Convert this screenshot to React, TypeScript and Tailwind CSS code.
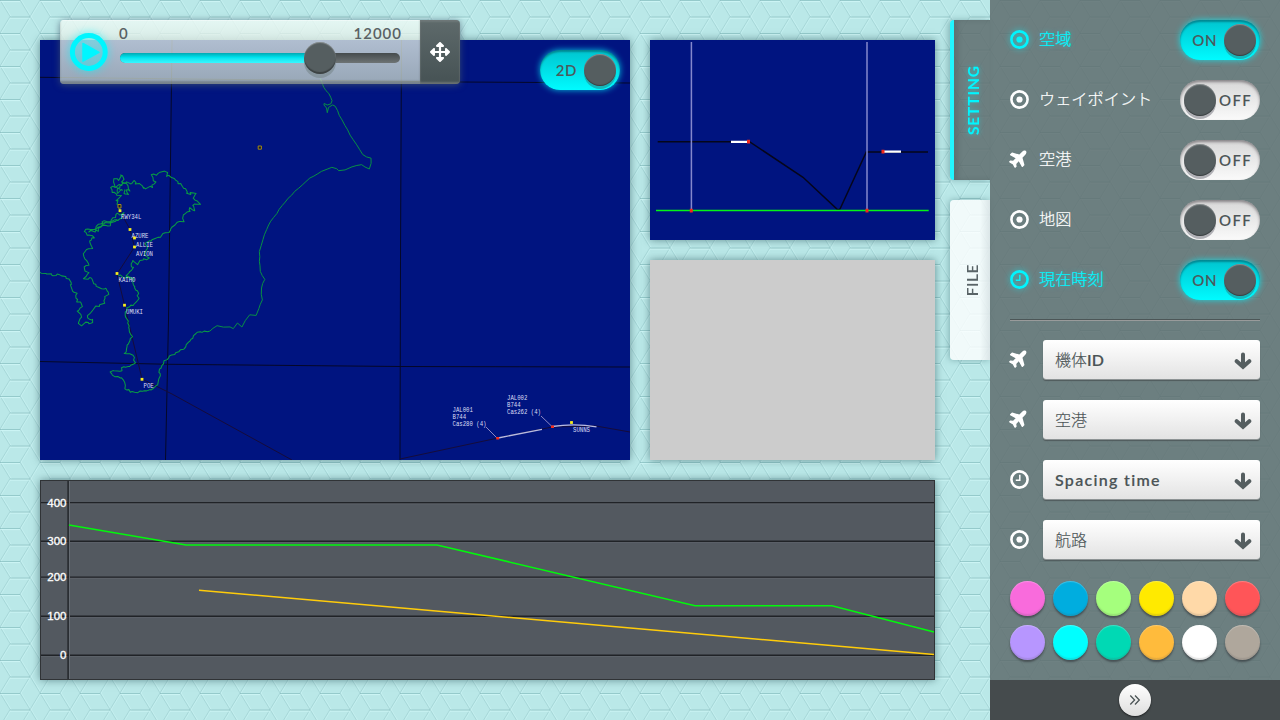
import type { ReactNode } from "react";
import { FaArrowsAlt, FaPlane } from "react-icons/fa";

type Pt = [number, number];

/* Breaks a polyline into short, slightly displaced steps so that it reads as a coast. */
function coast(points: Pt[], step: number, amp: number, seed: number): string {
  let s = seed;
  const rnd = () => {
    s = (s * 16807) % 2147483647;
    return s / 2147483647 - 0.5;
  };
  let d = `M${points[0][0]} ${points[0][1]}`;
  for (let i = 1; i < points.length; i++) {
    const [x0, y0] = points[i - 1];
    const [x1, y1] = points[i];
    const n = Math.max(1, Math.round(Math.hypot(x1 - x0, y1 - y0) / step));
    for (let k = 1; k <= n; k++) {
      const t = k / n;
      const x = x0 + (x1 - x0) * t + rnd() * amp;
      const y = y0 + (y1 - y0) * t + rnd() * amp;
      d += `L${x.toFixed(1)} ${y.toFixed(1)}`;
    }
  }
  return d;
}

const WEST: Pt[] = [[-90, 336], [-60, 343], [-35, 345], [-15, 350], [0, 366], [8, 390], [19, 398], [22, 425], [36, 432], [25, 455], [32, 470], [22, 490], [32, 500], [45, 490], [70, 490], [68, 480], [55, 478], [53, 465], [62, 455], [85, 438], [103, 428], [108, 408], [118, 394], [100, 386], [82, 382], [68, 363], [58, 352], [42, 358], [55, 340], [45, 325], [56, 312], [38, 290], [40, 280], [50, 268], [64, 265], [60, 240], [70, 232], [40, 218], [50, 206], [70, 212], [78, 200], [95, 190], [105, 184], [150, 178], [158, 160], [140, 165], [120, 185], [90, 197], [85, 210], [60, 215], [90, 200], [120, 195], [140, 178]];
const NORTH: Pt[] = [[150, 150], [148, 135], [140, 118], [150, 105], [132, 100], [125, 82], [140, 78], [130, 58], [150, 60], [155, 44], [160, 70], [142, 80], [155, 90], [138, 98], [150, 75], [165, 68], [180, 72], [188, 62], [200, 72], [215, 75], [222, 86], [245, 82], [256, 65], [248, 48], [262, 42], [278, 34], [292, 38], [288, 46], [305, 52], [320, 65], [340, 85], [358, 102], [368, 95], [380, 105], [370, 118], [388, 130], [370, 132], [376, 148], [362, 142], [355, 160], [340, 166], [338, 182], [318, 190], [300, 214], [280, 220], [262, 235], [240, 240], [228, 252], [232, 275], [222, 285], [235, 295], [210, 302], [205, 310], [190, 298], [180, 315], [188, 325], [172, 345], [180, 352], [145, 348]];
const SOUTH: Pt[] = [[172, 350], [188, 355], [192, 380], [203, 395], [205, 420], [195, 432], [172, 442], [165, 460], [175, 490], [178, 515], [185, 530], [172, 555], [165, 580], [188, 585], [195, 608], [180, 622], [160, 618], [155, 632], [120, 635], [130, 648], [155, 655], [165, 670], [162, 685], [180, 695], [225, 695], [245, 690], [262, 675], [268, 655], [270, 630], [285, 605], [305, 585], [345, 565], [355, 548], [368, 535], [375, 520], [390, 514], [405, 515], [420, 515]];
const BAY: Pt[] = [[158, 68], [172, 74], [180, 92], [170, 88], [174, 105], [160, 98], [166, 86]];
const EAST: Pt[] = [[-60, 783], [-40, 768], [-20, 772], [0, 771], [10, 775], [22, 760], [36, 772], [45, 752], [60, 735], [78, 737], [86, 715], [96, 690], [94, 655], [104, 628], [90, 603], [88, 545], [98, 508], [115, 465], [140, 430], [165, 395], [195, 365], [240, 325], [275, 303], [305, 293], [320, 295], [326, 301], [345, 299], [365, 290], [395, 283], [406, 290], [418, 298], [423, 280], [423, 264], [410, 261], [398, 253], [380, 225], [352, 180], [335, 150], [315, 108], [308, 104], [296, 111], [292, 128], [290, 113], [282, 105], [282, 100], [292, 106], [303, 101], [307, 92], [297, 70], [288, 62], [276, 40], [270, 25]];

const FIXES: { name: string; x: number; y: number; tx: number; ty: number }[] = [
  { name: "RWY34L", x: 120, y: 210.7, tx: 121, ty: 219 },
  { name: "AZURE", x: 130, y: 229.5, tx: 131.5, ty: 238 },
  { name: "ALLIE", x: 134.5, y: 238, tx: 136, ty: 246.5 },
  { name: "AVION", x: 134.5, y: 247, tx: 136, ty: 255.7 },
  { name: "KAIHO", x: 117, y: 273.5, tx: 118.5, ty: 282 },
  { name: "UMUKI", x: 124.5, y: 305.2, tx: 126, ty: 313.6 },
  { name: "POE", x: 142, y: 379.3, tx: 143.5, ty: 387.6 },
  { name: "SUNNS", x: 571.5, y: 422.5, tx: 573, ty: 431.5 },
];

const FLIGHTS = [
  { lines: ["JAL001", "B744", "Cas280 (4)"], x: 452.5, y: 411.5 },
  { lines: ["JAL002", "B744", "Cas262 (4)"], x: 507, y: 400 },
];

function MapText({ x, y, children }: { x: number; y: number; children: string }) {
  return (
    <text x={x} y={y} textLength={children.length * 3.4} lengthAdjust="spacingAndGlyphs" fontSize="7" fill="#dcdef4" className="font-['Liberation_Mono',monospace]">
      {children}
    </text>
  );
}

function Backdrop() {
  const diagonals = "M0 0L10 16.5M40 0L30 16.5M20 0L30 16.5M10 16.5L0 33M30 16.5L40 33M30 16.5L20 33";
  return (
    <svg className="absolute inset-0 h-full w-full" aria-hidden="true">
      <defs>
        <pattern id="cubes" width="40" height="33" patternUnits="userSpaceOnUse">
          <path d={diagonals} stroke="#d0f8f8" strokeWidth="1" fill="none" opacity=".45" transform="translate(1.2 0)" />
          <path d={diagonals} stroke="#86babd" strokeWidth="1" fill="none" opacity=".38" />
          <path d="M0 1.6H20M10 18.1H30" stroke="#d6fbfb" strokeWidth="1" opacity=".65" />
          <path d="M0 .5H20M10 17H30" stroke="#7db5b8" strokeWidth="1" opacity=".6" />
        </pattern>
      </defs>
      <rect width="100%" height="100%" fill="#bae8e8" />
      <rect width="100%" height="100%" fill="url(#cubes)" />
    </svg>
  );
}

function AirMap() {
  return (
    <svg viewBox="40 40 590 420" className="block h-[420px] w-[590px] bg-[#001480] shadow-[0_0_8px_rgba(30,70,75,0.55)]">
      <g stroke="#050828" strokeWidth="1" fill="none">
        <path d="M40 77.3L460 82L630 83M40 361.5L170 364.3L400 366.5L630 367M172 40L170.5 160L168.5 320L165.5 460M401.5 40L400.5 260L400 460" />
        <path d="M120 211L130 229.5L134.5 247L117 274L124.5 305L142 379L172 394L292 460M400 459L498 438L552 427L596 426L630 432" stroke="#150c3a" />
      </g>
      <g transform="translate(70 160) scale(.33333)" fill="none" stroke="#089c44" strokeWidth="3.1" strokeLinejoin="round">
        <path d={coast(WEST, 7, 8, 21)} />
        <path d={coast(NORTH, 7, 9, 77)} />
        <path d={coast(SOUTH, 7, 6, 5)} />
        <path d={coast(BAY, 6, 6, 9)} />
      </g>
      <path transform="translate(230 70) scale(.33333)" d={coast(EAST, 16, 2.5, 33)} fill="none" stroke="#089044" strokeWidth="3" strokeLinejoin="round" />
      <path d="M118 204.5h3v3.5h-3zM258.2 146h3.2v3.2h-3.2z" fill="#14143c" stroke="#a08a14" strokeWidth="1" />
      {FIXES.map((f) => (
        <g key={f.name}>
          <rect x={f.x - 1.4} y={f.y - 1.4} width="2.8" height="2.8" fill="#f7ee1c" />
          <MapText x={f.tx} y={f.ty}>{f.name}</MapText>
        </g>
      ))}
      {FLIGHTS.map((f) => (
        <g key={f.lines[0]}>
          {f.lines.map((l, i) => (
            <MapText key={l} x={f.x} y={f.y + i * 7.2}>{l}</MapText>
          ))}
        </g>
      ))}
      <path d="M486 427L497 438M541 416L552 426.5" stroke="#8a86c4" strokeWidth="1" />
      <path d="M498 438L542 429.3M552 426.5Q575 423 596.5 426.8" stroke="#b9bbe0" strokeWidth="1.3" fill="none" />
      <path d="M496.2 437h3v2.6h-3zM551 425.5h3v2.6h-3z" fill="#f32a1c" />
    </svg>
  );
}

function Profile() {
  return (
    <svg viewBox="650 40 285 200" className="block h-[200px] w-[285px] bg-[#001480] shadow-[0_0_8px_rgba(30,70,75,0.55)]">
      <path d="M657.7 141.7H749.5L803 177.3L838 210L840 209L866.3 152H928" fill="none" stroke="#05061a" strokeWidth="1.5" />
      <path d="M691.4 42V210M867 42V210" stroke="#8488cc" strokeWidth="1.5" />
      <path d="M656 210.6H928.7" stroke="#04f416" strokeWidth="1.5" />
      <path d="M731 141.8H748M884 151.7H901" stroke="#fff" strokeWidth="2.2" />
      <path d="M747 139.8h3v3.8h-3zM881.5 149.8h3v3.8h-3zM689.8 208.8h3v3.6h-3zM865.5 208.8h3v3.6h-3z" fill="#f0281c" />
    </svg>
  );
}

const LEVELS = [
  { label: "400", y: 502.6 },
  { label: "300", y: 541.3 },
  { label: "200", y: 577.1 },
  { label: "100", y: 616.3 },
  { label: "0", y: 655.2 },
];

function AltitudeChart() {
  return (
    <svg viewBox="40 480 895 200" className="block h-[200px] w-[895px] bg-[#535960] shadow-[0_0_8px_rgba(30,70,75,0.55)]">
      {LEVELS.map((l) => (
        <g key={l.label}>
          <path d={`M40 ${l.y + 1.3}H935`} stroke="#5c6269" strokeWidth="1" />
          <path d={`M40 ${l.y}H935`} stroke="#202327" strokeWidth="1.4" />
        </g>
      ))}
      <path d="M69.5 480V680" stroke="#666c73" strokeWidth="1" />
      <path d="M68.1 480V680" stroke="#24272b" strokeWidth="1.5" />
      {LEVELS.map((l) => (
        <text key={l.label} x="66.5" y={l.y + 4} textAnchor="end" fontSize="10.3" textLength={l.label.length * 6.4} lengthAdjust="spacingAndGlyphs" fill="#fff" stroke="#fff" strokeWidth=".3" className="font-['Liberation_Sans',sans-serif]">
          {l.label}
        </text>
      ))}
      <path d="M69 525L186 544.9H437L695 605.8H832L934 632" fill="none" stroke="#02f80c" strokeWidth="1.5" />
      <path d="M199 590.2L934 654.6" stroke="#ffcc0a" strokeWidth="1.5" />
      <rect x="40.5" y="480.5" width="894" height="199" fill="none" stroke="#303336" />
    </svg>
  );
}

function Toggle({ on, label }: { on: boolean; label: string }) {
  return on ? (
    <div className="flex h-10 w-20 items-center justify-end gap-[7px] rounded-full bg-linear-to-b from-[#00c4cf] to-[#00fbff] pr-1 shadow-[0_0_6px_rgba(0,245,255,0.75),inset_0_2px_2px_rgba(0,95,105,0.6)]">
      <span className="text-[15px] font-semibold tracking-[0.6px] text-[#4b5a5c]">{label}</span>
      <Knob shade="shadow-[0_3px_0_rgba(30,160,165,0.75),inset_0_1px_1px_rgba(255,255,255,0.3),inset_0_-1px_1px_rgba(0,0,0,0.35)]" />
    </div>
  ) : (
    <div className="flex h-10 w-20 items-center gap-[3px] rounded-full bg-linear-to-b from-[#d8d8d8] to-[#fafafa] pl-1 shadow-[inset_0_2px_3px_rgba(80,75,80,0.6)]">
      <Knob shade="shadow-[0_3px_0_rgba(165,165,170,0.85),inset_0_1px_1px_rgba(255,255,255,0.3),inset_0_-1px_1px_rgba(0,0,0,0.35)]" />
      <span className="text-[15px] font-semibold tracking-[1.4px] text-[#4d5557]">{label}</span>
    </div>
  );
}

function Knob({ shade }: { shade: string }) {
  return <span className={`block h-8 w-8 shrink-0 rounded-full bg-[#555e60] ${shade}`} />;
}

type IconName = "target" | "plane" | "clock";

function Icon({ name }: { name: IconName }) {
  if (name === "plane") return <FaPlane className="-mt-[2px] -ml-px h-[20px] w-[20px] -rotate-45" />;
  return (
    <svg viewBox="0 0 19 19" className="h-[19px] w-[19px]" fill="none" stroke="currentColor">
      <circle cx="9.5" cy="9.5" r="8.1" strokeWidth="2.6" />
      {name === "target" ? <circle cx="9.5" cy="9.5" r="3.1" fill="currentColor" stroke="none" /> : <path d="M9.8 4.8V10.2H5.8" strokeWidth="1.5" />}
    </svg>
  );
}

const LAYERS: { icon: IconName; label: string; on: boolean }[] = [
  { icon: "target", label: "空域", on: true },
  { icon: "target", label: "ウェイポイント", on: false },
  { icon: "plane", label: "空港", on: false },
  { icon: "target", label: "地図", on: false },
  { icon: "clock", label: "現在時刻", on: true },
];

const SELECTS: { icon: IconName; label: ReactNode }[] = [
  { icon: "plane", label: <>機体<b className="font-semibold">ID</b></> },
  { icon: "plane", label: "空港" },
  { icon: "clock", label: <b className="text-[16px] font-semibold tracking-[1.3px]">Spacing time</b> },
  { icon: "target", label: "航路" },
];

const SWATCHES = [
  "bg-[#f96bdc]", "bg-[#00addf]", "bg-[#a5ff7d]", "bg-[#ffea00]", "bg-[#ffd9a8]", "bg-[#ff5558]",
  "bg-[#b796ff]", "bg-[#00ffff]", "bg-[#00d9b4]", "bg-[#ffbb3c]", "bg-[#ffffff]", "bg-[#afa79c]",
];

function Sidebar() {
  return (
    <aside className="flex w-[290px] flex-col bg-[#5e6c6d]/85">
      <div className="flex h-[680px] flex-col px-5 pt-5">
        <div className="flex flex-col gap-5">
          {LAYERS.map((l) => (
            <div key={l.label} className={`flex h-10 items-center ${l.on ? "text-[#00f6ff]" : "text-white"}`}>
              <span className={`w-[29px] pb-[2px] ${l.on ? "drop-shadow-[0_0_3px_rgba(0,246,255,0.6)]" : ""}`}><Icon name={l.icon} /></span>
              <span className={`flex-1 pb-px text-[16.2px] leading-none font-light [-webkit-text-stroke:0.2px] ${l.on ? "[text-shadow:0_0_5px_rgba(0,246,255,0.5)]" : ""}`}>{l.label}</span>
              <Toggle on={l.on} label={l.on ? "ON" : "OFF"} />
            </div>
          ))}
        </div>
        <hr className="mt-[19px] h-[2px] border-t border-b border-t-[#4c5657] border-b-[#999b9b]" />
        <div className="mt-[19px] flex flex-col gap-5">
          {SELECTS.map((s, i) => (
            <div key={i} className="flex h-10 items-start text-white">
              <span className="flex h-10 w-[33px] items-center pb-[2px]"><Icon name={s.icon} /></span>
              <button className="flex h-[39px] flex-1 items-center justify-between rounded-[3px] bg-linear-to-b from-white to-[#e3e3e3] pr-2 pl-3 text-left shadow-[0_1px_0_#8e9495,0_2px_1px_#505b5c]">
                <span className="pt-px text-[16px] leading-none font-light text-[#4b5456] [-webkit-text-stroke:0.15px]">{s.label}</span>
                <svg viewBox="0 0 18 18" className="mt-[3px] h-[18px] w-[18px]" fill="none" stroke="#555e60" strokeWidth="4" strokeLinecap="round">
                  <path d="M9 2.5V14M2.7 9.2L9 14.8L15.3 9.2" />
                </svg>
              </button>
            </div>
          ))}
        </div>
        <div className="mt-[21px] grid grid-cols-6 gap-x-2 gap-y-[9px]">
          {SWATCHES.map((c) => (
            <span key={c} className={`h-[35px] w-[35px] rounded-full ${c} shadow-[0_2px_2px_rgba(50,55,60,0.65),inset_0_-2px_1px_rgba(80,80,80,0.15),inset_0_1px_1px_rgba(255,255,255,0.25)]`} />
          ))}
        </div>
      </div>
      <footer className="flex h-10 items-center justify-center bg-[#454b4d]">
        <button className="flex h-8 w-8 items-center justify-center rounded-full bg-linear-to-b from-white to-[#dedede] shadow-[0_1px_2px_rgba(0,0,0,0.6)]">
          <svg viewBox="0 0 12 12" className="h-3 w-3" fill="none" stroke="#4b5456" strokeWidth="1.3">
            <path d="M1.3 1.5L5.6 6L1.3 10.5M6 1.5L10.3 6L6 10.5" />
          </svg>
        </button>
      </footer>
    </aside>
  );
}

function Player() {
  return (
    <div className="absolute top-5 left-[60px] flex h-16 w-[400px] overflow-hidden rounded-[4px] shadow-[0_1px_7px_rgba(70,90,110,0.75)]">
      <div className="flex flex-1 bg-linear-to-b from-[#f0fbf6]/78 to-[#c2d0c6]/78 pt-[6px] pl-[10px] shadow-[inset_0_-3px_2px_rgba(70,75,75,0.4),inset_0_1px_0_rgba(255,255,255,0.4)]">
        <svg viewBox="0 0 38 38" className="mt-[7px] h-[38px] w-[38px] overflow-visible drop-shadow-[0_0_4px_rgba(0,246,255,0.7)]">
          <circle cx="18.8" cy="19" r="16.4" fill="none" stroke="#00f6ff" strokeWidth="5" />
          <path d="M13 10.5L29 19.3L13 28.2Z" fill="#00f6ff" stroke="#00f6ff" strokeWidth="1.5" strokeLinejoin="round" />
        </svg>
        <div className="ml-3 w-[280px]">
          <div className="-mr-[2px] flex h-[15px] items-center justify-between text-[15px] leading-none font-semibold text-[#596164]">
            <span className="-ml-px">0</span>
            <span className="tracking-[1px]">12000</span>
          </div>
          <div className="relative mt-3 h-[10px] rounded-full bg-linear-to-b from-[#454b4d] to-[#6e7475]">
            <div className="h-full w-[200px] rounded-l-full bg-linear-to-b from-[#00a9b3] via-[#00e3ee] via-45% to-[#35f7ff]" />
            <span className="absolute -top-[11px] left-[184px] h-8 w-8 rounded-full bg-[#555e60] shadow-[0_4px_0_rgba(120,135,140,0.6),inset_0_1px_1px_rgba(255,255,255,0.3),inset_0_-2px_1px_rgba(0,0,0,0.3)]" />
          </div>
        </div>
      </div>
      <button className="flex w-10 items-center justify-center bg-linear-to-b from-[#5e6a6b] to-[#465254] text-white shadow-[inset_0_-2px_2px_rgba(130,135,135,0.6),inset_0_2px_2px_rgba(130,135,135,0.5)]">
        <FaArrowsAlt className="mr-px h-5 w-5" />
      </button>
    </div>
  );
}

function Tabs() {
  return (
    <nav className="flex w-10 flex-col gap-5 pt-5">
      <button className="flex h-40 items-center justify-center rounded-l-[4px] border-l-4 border-[#22f6ff] bg-[#5e6c6d]/85 pl-[3px] text-[#00f6ff] shadow-[-2px_0_6px_rgba(40,90,95,0.35),inset_4px_0_5px_rgba(60,70,72,0.25)]">
        <span className="rotate-180 text-[15.5px] leading-none font-bold tracking-[0.9px] [text-shadow:0_0_5px_rgba(0,246,255,0.5)] [writing-mode:vertical-rl]">SETTING</span>
      </button>
      <button className="flex h-40 items-center justify-center rounded-l-[4px] bg-linear-to-r from-white/80 from-75% to-[#dfe6e8]/90 pl-[6px] text-[#596467] shadow-[-1px_0_6px_rgba(40,90,95,0.4)]">
        <span className="rotate-180 text-[15.5px] leading-none font-semibold tracking-[0.5px] [writing-mode:vertical-rl]">FILE</span>
      </button>
    </nav>
  );
}

export default function App() {
  return (
    <div className="relative isolate flex h-[720px] w-[1280px] overflow-hidden font-['Lato','Noto_Sans_CJK_JP',sans-serif]">
      <div className="absolute inset-0 -z-10"><Backdrop /></div>
      <main className="flex w-[950px] flex-col gap-5 pt-10 pl-10">
        <div className="flex gap-5">
          <AirMap />
          <div className="flex flex-col gap-5">
            <Profile />
            <div className="h-[200px] w-[285px] bg-[#cccccc] shadow-[0_0_8px_rgba(30,70,75,0.55)]" />
          </div>
        </div>
        <AltitudeChart />
      </main>
      <Tabs />
      <Sidebar />
      <Player />
      <div className="absolute top-[50px] left-[540px]"><Toggle on label="2D" /></div>
    </div>
  );
}
